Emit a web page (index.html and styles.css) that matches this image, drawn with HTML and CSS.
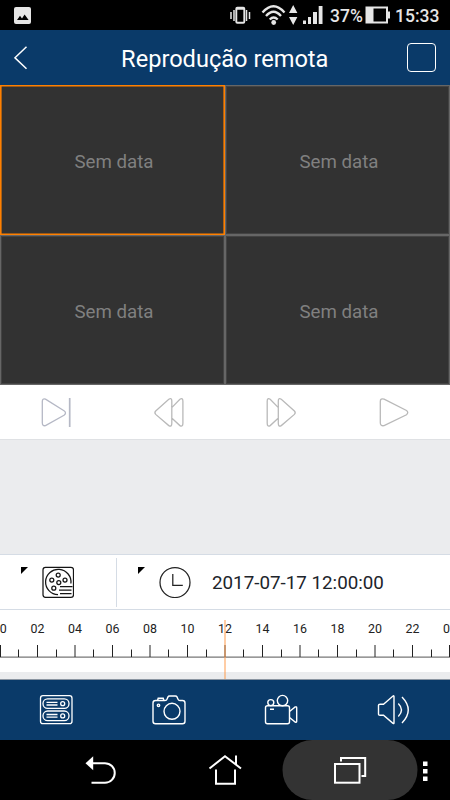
FILE: index.html
```html
<!DOCTYPE html>
<html lang="pt">
<head>
<meta charset="utf-8">
<title>Reprodução remota</title>
<link rel="stylesheet" href="styles.css">
</head>
<body>
<div class="status">
  <svg class="photo" width="17" height="17" viewBox="0 0 17 17"><rect width="17" height="17" rx="2" fill="#e6e6e6"/><path d="M3 13l3-4.200 2 2.600 2.600-4 4 5.600z" fill="#000"/></svg>
  <svg class="signals" width="95" height="30" viewBox="230 0 95 30" fill="none" stroke="#e6e6e6">
    <path d="M231 12v7M234 10v11M246.500 10v11M249.500 12v7" stroke-width="1.500"/><rect x="236.300" y="7.800" width="8" height="15" rx="1" stroke-width="1.900"/><path d="M237 8.500h7" stroke-width="2.500"/>
    <path d="M262.500 12.500q11-12.500 22 0M266 16q7.500-8.500 15 0M269.700 19.500q4-4 8 0" stroke-width="2.300"/><circle cx="273.700" cy="22.500" r="2.400" fill="#e6e6e6" stroke="none"/>
    <path d="M289 13l4.200-8 4.200 8zM289 17h8.400l-4.200 8zM303 20.500h3v3.500h-3zM308 17h3v7h-3zM313 12h4v12h-4zM318.700 6h3.800v18h-3.800z" fill="#e6e6e6" stroke="none"/>
  </svg>
  <span class="percent">37%</span>
  <svg class="battery" width="26" height="18" viewBox="0 0 26 18" fill="none" stroke="#e6e6e6" stroke-width="2"><path d="M1.500 1.500h20.500v15H1.500z"/><path d="M1 1h7.500v16H1zM23 5.500h2v7h-2z" fill="#e6e6e6" stroke="none"/></svg>
  <span class="clock">15:33</span>
</div>
<header class="header">
  <svg class="back" width="14" height="24" viewBox="0 0 14 24"><path d="M12.500 .8L1 11.800 12.500 22.800" fill="none" stroke="#fff" stroke-width="1.500"/></svg>
  <h1>Reprodução remota</h1>
  <span class="square"></span>
</header>
<main class="videos">
  <div class="video selected">Sem data</div><div class="video">Sem data</div>
  <div class="video">Sem data</div><div class="video">Sem data</div>
</main>
<div class="controls">
  <svg viewBox="0 0 40 40" stroke="#b5b8c5"><path d="M6.300 9.500q0-3.500 3.200-2.300L28 18.800q3 2 0 4.400L9.500 33.600q-3.200.8-3.200-2.900z"/><path d="M33.700 6v29" stroke-width="1.700"/></svg>
  <svg viewBox="0 0 40 40" stroke="#b9b9b9"><path d="M22.800 9q0-3.500-3-1.800L6.700 19q-1.600 1.700 0 3.400L19.800 33.600q3 1.700 3-2.300zM23 15.400l7.900-8.200q3-1.700 3 2v22q0 4-3 2.400L23 26.300"/></svg>
  <svg viewBox="0 0 40 40" stroke="#b9b9b9"><path d="M17.300 9q0-3.500 3-1.800L33.400 19q1.600 1.700 0 3.400L20.300 33.600q-3 1.700-3-2.300zM17.100 15.400L9.200 7.200q-3-1.700-3 2v22q0 4 3 2.400l7.900-7.300"/></svg>
  <svg viewBox="0 0 40 40" stroke="#b9b9b9"><path d="M6.300 9.500q0-3.500 3.800-2.300L32.500 18.500q2.500 2 0 4.300L10.100 33.600q-3.800.8-3.800-2.900z"/></svg>
</div>
<div class="spacer"></div>
<div class="picker">
  <div class="source">
    <i class="corner"></i>
    <svg width="32" height="32" viewBox="42 566 32 32" fill="none" stroke="#151515" stroke-width="1.250"><rect x="43" y="567.300" width="30.500" height="30" rx="2.500"/><path d="M58 594.700A12.700 12.700 0 1 1 70.900 583.500"/><circle cx="58.200" cy="575" r="2"/><circle cx="51.800" cy="580" r="2"/><circle cx="65" cy="580" r="2"/><circle cx="58.800" cy="582.500" r="2"/><circle cx="53.800" cy="588.200" r="2"/><path d="M60 586.500h12.500M59 590h12.500M60 593.700h11.500"/></svg>
  </div>
  <div class="date">
    <i class="corner"></i>
    <svg width="32" height="32" viewBox="0 0 32 32" fill="none" stroke="#222" stroke-width="1.250"><circle cx="16" cy="16.500" r="15"/><path d="M13.800 8v11.300h10"/></svg>
    <span>2017-07-17 12:00:00</span>
  </div>
</div>
<div class="timeline">
  <svg width="450" height="62" viewBox="0 610 450 62">
    <g class="hours"><text class="first" x="-.3" y="633.300">0</text><text x="37.500" y="633.300">02</text><text x="75" y="633.300">04</text><text x="112.500" y="633.300">06</text><text x="150" y="633.300">08</text><text x="187.500" y="633.300">10</text><text x="225" y="633.300">12</text><text x="262.500" y="633.300">14</text><text x="300" y="633.300">16</text><text x="337.500" y="633.300">18</text><text x="375" y="633.300">20</text><text x="412.500" y="633.300">22</text><text class="last" x="450" y="633.300">0</text></g>
    <path d="M0 657.200h450" stroke="#777" stroke-width="1.200"/>
    <path d="M.5 645v12M37.500 645v12M75 645v12M112.500 645v12M150 645v12M187.500 645v12M225 645v12M262.500 645v12M300 645v12M337.500 645v12M375 645v12M412.500 645v12M449.500 645v12M18.500 649.500v7.500M56.500 649.500v7.500M93.500 649.500v7.500M131.500 649.500v7.500M168.500 649.500v7.500M206.500 649.500v7.500M243.500 649.500v7.500M281.500 649.500v7.500M318.500 649.500v7.500M356.500 649.500v7.500M393.500 649.500v7.500M431.500 649.500v7.500" stroke="#222"/>
  </svg>
  <i class="cursor"></i>
</div>
<div class="tools">
  <svg viewBox="0 0 40 40"><g stroke-width="1.300"><rect x="4.500" y="5.700" width="31.500" height="28" rx="2.500"/><rect x="7" y="8.800" width="26" height="9.600" rx="4.700"/><rect x="7" y="21" width="26" height="9.600" rx="4.700"/><path d="M10.500 12.300h11M10.500 15h11M10.500 24.500h11M10.500 27.200h11"/><circle cx="26.700" cy="13.700" r="2"/><circle cx="26.700" cy="25.900" r="2"/></g></svg>
  <svg viewBox="0 0 40 40"><path d="M6.500 10.500H16q1.500 0 2-1.300l1-2.300q.4-.9 1.500-.9h6q1 0 1.500.9l1 2.300q.5 1.300 2 1.300h2.500q2.500 0 2.500 2.500v18.200q0 2.500-2.500 2.500h-27Q4 33.700 4 31.200V13q0-2.500 2.500-2.500zM8.500 10.500l.7-2.300h5l.7 2.300"/><circle cx="23" cy="21.300" r="8"/><circle cx="9.500" cy="15.300" r="1.200"/></svg>
  <svg viewBox="0 0 40 40"><rect x="4.500" y="15.800" width="24" height="18" rx="2"/><circle cx="9.800" cy="12.600" r="3"/><circle cx="21.500" cy="10.600" r="5.200"/><path d="M28.500 21.500l5.700-4.500q1.500-.5 1.500.8v13.500q0 1.300-1.500.8L28.500 27.500M9 19.200h4"/></svg>
  <svg viewBox="0 0 40 40"><path d="M4.500 15.200q0-1 1.500-1H9.500l9.500-8.200q1-.6 1 .5v26.400q0 1.100-1 .5L9.500 25.200H6q-1.500 0-1.500-1zM24.300 13.500q6.400 6.500 0 13M28 7q12.500 13 0 26"/></svg>
</div>
<nav class="nav">
  <svg width="450" height="60" viewBox="0 740 450 60" fill="none" stroke="#fff" stroke-width="2">
    <rect x="282.500" y="740" width="135" height="60" rx="30" fill="#333" stroke="none"/>
    <path d="M92 763.200h13a9.700 9.700 0 0 1 0 19.500H91.500"/><path d="M85.500 763.200l7.700-7v14z" fill="#fff" stroke="none"/>
    <path d="M209.500 768.500L225 756.200l16 12.300M236 755.500v9M216 769.500v14.200h19v-14.200"/>
    <rect x="335" y="764" width="24.500" height="18.700"/><path d="M341 761.500V758h24.200v18H361.500"/>
    <path d="M423 761.500h4.500v4.500H423zM423 769h4.500v4.500H423zM423 776.500h4.500v4.500H423z" fill="#fff" stroke="none"/>
  </svg>
</nav>
</body>
</html>
```
FILE: styles.css
```css
* { box-sizing: border-box; }
body { margin: 0; width: 450px; height: 800px; overflow: hidden; font-family: Roboto, sans-serif; background: #fff; }
svg { display: block; flex: none; }
.status { height: 30px; background: #000; color: #e6e6e6; display: flex; align-items: center; padding-left: 14px; font-size: 17.500px; }
.signals { margin-left: 199px; }
.percent { margin-left: 5px; width: 34px; font-weight: 500; white-space: nowrap; padding-top: 2px; }
.battery { margin-left: 1px; }
.clock { margin-left: 4px; font-weight: 500; font-size: 17.500px; padding-top: 2px; }
.header { height: 55px; background: #0a3a69; color: #fff; display: flex; align-items: center; justify-content: space-between; padding: 0 14px 0 13.500px; }
.header h1 { margin: 3px 0 0 15px; font-size: 23.600px; font-weight: 400; line-height: 30px; }
.square { width: 29px; height: 29px; border: 1.500px solid #fff; border-radius: 4px; }
.videos { display: grid; grid-template: 150px 150px / 225px 225px; }
.video { background: #323232; color: #808080; border: 1px solid #666; box-shadow: inset 0 0 0 1px #434343; display: flex; align-items: center; justify-content: center; font-size: 18.700px; padding-top: 3px; padding-left: 3px; }
.selected { border-color: #ff8000; box-shadow: inset 0 0 0 .6px #ff8000; }
.controls { height: 55px; border-bottom: 1px solid #dfe1e4; display: grid; grid-template-columns: repeat(4, 1fr); justify-items: center; padding-top: 7px; }
.controls svg, .tools svg { width: 40px; height: 40px; fill: none; stroke-width: 1.300px; }
.spacer { height: 114px; background: #ebecee; }
.picker { height: 56px; display: flex; border: solid #d5dce5; border-width: 1px 0; padding: 3px 0 2px; }
.source, .date { display: flex; padding-top: 8px; }
.source { width: 117px; padding-left: 21px; border-right: 1px solid #d5dce5; }
.date { padding-left: 21px; }
.corner { width: 7px; height: 7px; margin-top: 1px; background: #000; clip-path: polygon(0 0, 100% 0, 0 100%); }
.source svg { margin-left: 14px; }
.date svg { margin-left: 14px; }
.date span { margin-left: 21px; font-size: 18.800px; line-height: 34px; color: #20242a; white-space: nowrap; }
.timeline { position: relative; height: 70px; background: #ebecee; border-bottom: 1px solid #8b95a1; }
.timeline svg { background: #fff; }
.hours { font-size: 12.400px; fill: #222; text-anchor: middle; }
.hours .first { text-anchor: start; }
.hours .last { text-anchor: end; }
.cursor { position: absolute; left: 224px; top: 10px; bottom: 0; width: 2px; background: #ff9c4b80; }
.tools { height: 60px; background: #0a3a69; display: grid; grid-template-columns: repeat(4, 1fr); justify-items: center; align-items: center; }
.tools svg { stroke: #fff; stroke-width: 1.400px; }
.nav { height: 60px; background: #000; }
```
